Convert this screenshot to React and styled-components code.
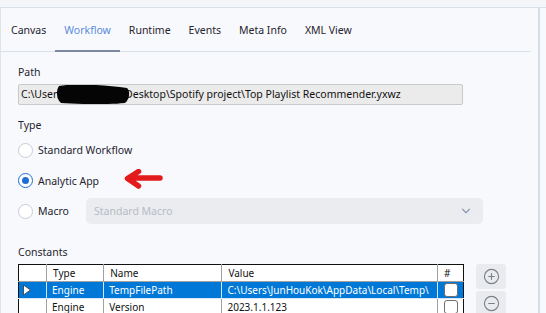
import React, { useState } from 'react'
import styled, { createGlobalStyle } from 'styled-components'
import { CirclePlus, CircleMinus, ChevronDown } from 'lucide-react'

const GlobalStyle = createGlobalStyle`
  html, body {
    margin: 0;
    padding: 0;
    background: #f8f9fc;
    overflow: hidden;
  }
  body {
    font-family: "Segoe UI", "Noto Sans", "Open Sans", sans-serif;
    font-size: 10.5px;
    color: #1f2430;
  }
`

const tabs = ['Canvas', 'Workflow', 'Runtime', 'Events', 'Meta Info', 'XML View']

const constants = [
  { type: 'Engine', name: 'TempFilePath', value: 'C:\\Users\\JunHouKok\\AppData\\Local\\Temp\\', selected: true },
  { type: 'Engine', name: 'Version', value: '2023.1.1.123', selected: false },
]

function App() {
  const [activeTab, setActiveTab] = useState('Workflow')
  const [kind, setKind] = useState('app')

  return (
    <Screen>
      <GlobalStyle />
      <TopStrip />
      <Body>
        <Panel>
          <TabBar>
            {tabs.map(tab => (
              <Tab key={tab} $active={tab === activeTab} onClick={() => setActiveTab(tab)}>
                {tab}
              </Tab>
            ))}
          </TabBar>

          <Content>
            <Label>Path</Label>
            <PathBox>
              C:\Users\JunHouKok\Desktop\Spotify project\Top Playlist Recommender.yxwz
              <Redaction viewBox="0 0 76 22" aria-hidden="true">
                <path d="M4 3 C 20 0, 50 2, 72 5 C 76 9, 74 17, 70 20 C 50 22, 20 21, 6 20 C 1 16, 1 7, 4 3 Z" fill="#050505" />
              </Redaction>
            </PathBox>

            <Label $top={12}>Type</Label>
            <RadioList>
              <RadioRow onClick={() => setKind('std')}>
                <Radio $checked={kind === 'std'} />
                Standard Workflow
              </RadioRow>
              <RadioRow onClick={() => setKind('app')}>
                <Radio $checked={kind === 'app'} />
                Analytic App
                <Arrow viewBox="0 0 40 20" aria-hidden="true">
                  <path d="M36 9 L10 9 M14.5 2.5 L3.5 9.5 L14.5 17" stroke="#e31b1b" strokeWidth="5.5" strokeLinecap="round" strokeLinejoin="round" fill="none" />
                </Arrow>
              </RadioRow>
              <RadioRow onClick={() => setKind('macro')}>
                <Radio $checked={kind === 'macro'} />
                <MacroText>Macro</MacroText>
                <Select>
                  Standard Macro
                  <ChevronDown size={14} color="#8e97b2" strokeWidth={2} />
                </Select>
              </RadioRow>
            </RadioList>

            <Label $top={17}>Constants</Label>
            <TableRow>
              <Table>
                <thead>
                  <tr>
                    <Th $w={28}></Th>
                    <Th $w={57}>Type</Th>
                    <Th $w={118}>Name</Th>
                    <Th $w={215}>Value</Th>
                    <Th $w={26}>#</Th>
                  </tr>
                </thead>
                <tbody>
                  {constants.map(c => (
                    <Tr key={c.name} $selected={c.selected}>
                      <Td>
                        {c.selected && (
                          <svg width="10" height="12" viewBox="0 0 10 12">
                            <path d="M1.5 1 L8.5 6 L1.5 11 Z" fill="#ffffff" stroke="#4a4f57" strokeWidth="1" />
                          </svg>
                        )}
                      </Td>
                      <Td>{c.type}</Td>
                      <Td>{c.name}</Td>
                      <Td>{c.value}</Td>
                      <Td><Check /></Td>
                    </Tr>
                  ))}
                </tbody>
              </Table>
              <SideButtons>
                <IconButton><CirclePlus size={17} color="#7b808a" strokeWidth={1.6} /></IconButton>
                <IconButton><CircleMinus size={17} color="#7b808a" strokeWidth={1.6} /></IconButton>
              </SideButtons>
            </TableRow>
          </Content>
        </Panel>
        <Scroll />
        <Gutter />
      </Body>
    </Screen>
  )
}

export default App

const Screen = styled.div`
  width: 546px;
  height: 313px;
  display: flex;
  flex-direction: column;
  overflow: hidden;
`

const TopStrip = styled.div`
  height: 7px;
  flex: none;
  background: #f3f5f9;
  border-bottom: 1px solid #d9e0ea;
`

const Body = styled.div`
  flex: 1;
  display: flex;
  min-height: 0;
`

const Panel = styled.div`
  width: 537px;
  border-left: 1px solid #dfe4ec;
  background: #f8f9fc;
  display: flex;
  flex-direction: column;
`

const Scroll = styled.div`
  width: 2px;
  background: #d3dcea;
`

const Gutter = styled.div`
  flex: 1;
  background: #f8f9fc;
`

const TabBar = styled.div`
  flex: none;
  display: flex;
  height: 43px;
  margin-right: 7px;
  border-bottom: 1px solid #d9e0ea;
`

const Tab = styled.div`
  display: flex;
  align-items: center;
  padding: 1px 9px 0;
  font-size: 10.5px;
  color: ${p => (p.$active ? '#5a8ce0' : '#1f2430')};
  border-bottom: 2px solid ${p => (p.$active ? '#7d89a3' : 'transparent')};
  margin-bottom: -1px;
  cursor: pointer;
  &:first-child { padding-left: 10px; }
`

const Content = styled.div`
  flex: none;
  padding: 12px 0 0 17px;
  display: flex;
  flex-direction: column;
`

const Label = styled.div`
  margin-top: ${p => p.$top || 0}px;
  height: 16px;
  line-height: 16px;
  font-size: 10.5px;
  color: #1f2430;
`

const PathBox = styled.div`
  position: relative;
  margin-top: 4px;
  width: 441px;
  height: 19px;
  line-height: 19px;
  padding: 0 0 0 2px;
  background: #ebebeb;
  border: 1px solid #c9c9c9;
  border-radius: 2px;
  font-size: 10.5px;
  color: #111;
  white-space: nowrap;
  overflow: hidden;
`

const Redaction = styled.svg`
  position: absolute;
  left: 36px;
  top: -2px;
  width: 76px;
  height: 22px;
`

const RadioList = styled.div`
  display: flex;
  flex-direction: column;
  margin-top: 2px;
`

const RadioRow = styled.div`
  position: relative;
  display: flex;
  align-items: center;
  height: 30.5px;
  font-size: 10.5px;
  color: #1f2430;
  cursor: pointer;
`

const Radio = styled.span`
  box-sizing: border-box;
  width: 15px;
  height: 15px;
  margin-right: 5px;
  border-radius: 50%;
  background: #fff;
  border: 1px solid ${p => (p.$checked ? '#1d6fd6' : '#c6ccd6')};
  display: flex;
  align-items: center;
  justify-content: center;

  &::after {
    content: '';
    width: 7px;
    height: 7px;
    border-radius: 50%;
    background: ${p => (p.$checked ? '#1d6fd6' : 'transparent')};
  }
`

const Arrow = styled.svg`
  position: absolute;
  left: 106px;
  top: 3px;
  width: 40px;
  height: 20px;
`

const MacroText = styled.span`
  width: 48px;
`

const Select = styled.div`
  box-sizing: border-box;
  width: 397px;
  height: 26px;
  padding: 0 10px 0 8px;
  display: flex;
  align-items: center;
  justify-content: space-between;
  background: #ebecf0;
  border-radius: 5px;
  color: #b7bbc4;
  font-size: 10.5px;
`

const TableRow = styled.div`
  display: flex;
  align-items: flex-start;
  gap: 12px;
  margin-top: 4px;
`

const Table = styled.table`
  border-collapse: collapse;
  border: 1px solid #111;
  background: #fff;
  table-layout: fixed;
  width: 446px;
  font-size: 10px;
`

const Th = styled.th`
  box-sizing: border-box;
  width: ${p => p.$w}px;
  height: 17px;
  padding: 0 0 0 6px;
  text-align: left;
  font-weight: normal;
  color: #111;
  border-right: 1px solid #a0a0a0;
  border-bottom: 1px solid #a0a0a0;
  &:last-child { border-right: none; }
`

const Tr = styled.tr`
  background: ${p => (p.$selected ? '#0078d7' : '#fff')};
  color: ${p => (p.$selected ? '#fff' : '#111')};
  & td {
    border-color: ${p => (p.$selected ? '#d6e6f6' : '#a0a0a0')};
  }
`

const Td = styled.td`
  box-sizing: border-box;
  height: 17px;
  padding: 0 0 0 5px;
  white-space: nowrap;
  overflow: hidden;
  border-right: 1px solid #a0a0a0;
  border-bottom: 1px solid #a0a0a0;
  vertical-align: middle;
  &:first-child { padding-left: 3px; }
  &:last-child { border-right: none; padding-left: 6px; }
  & svg { display: block; }
`

const Check = styled.span`
  display: block;
  box-sizing: border-box;
  width: 14px;
  height: 14px;
  background: #fff;
  border: 1px solid #6f6f6f;
  border-radius: 3px;
`

const SideButtons = styled.div`
  display: flex;
  flex-direction: column;
  gap: 2px;
`

const IconButton = styled.div`
  width: 30px;
  height: 25px;
  border-radius: 3px;
  background: #e9ebef;
  display: flex;
  align-items: center;
  justify-content: center;
`
